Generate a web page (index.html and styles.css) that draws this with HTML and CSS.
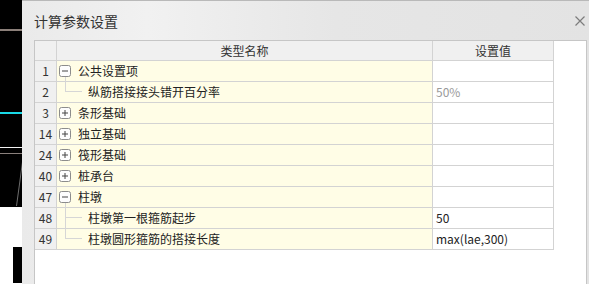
FILE: index.html
```html
<!DOCTYPE html>
<html lang="zh-CN">
<head>
    <meta charset="UTF-8">
    <meta name="viewport" content="width=device-width, initial-scale=1.0">
    <title>计算参数设置</title>
    <link rel="stylesheet" href="styles.css">
</head>
<body>
    <div class="screen">
        <!-- CAD drawing area behind the dialog -->
        <svg class="cad" width="22" height="284" viewBox="0 0 22 284">
            <rect x="0" y="0" width="22" height="284" fill="#000"/>
            <rect x="0" y="29" width="22" height="2" fill="#8b7f79"/>
            <rect x="0" y="112" width="22" height="2" fill="#19d9e6"/>
            <rect x="0" y="147" width="22" height="1" fill="#f2f2f2"/>
            <rect x="0" y="153" width="22" height="1" fill="#8a807c"/>
            <line x1="22.5" y1="162" x2="16.5" y2="206" stroke="#6e6e6e" stroke-width="1"/>
            <rect x="0" y="207" width="22" height="77" fill="#fff"/>
            <rect x="13" y="247" width="9" height="36" fill="#000"/>
        </svg>

        <div class="dialog">
            <div class="titlebar">
                <span class="title">计算参数设置</span>
                <svg class="close" width="10" height="10" viewBox="0 0 10 10">
                    <path d="M0.5 0.5 L9.5 9.5 M9.5 0.5 L0.5 9.5" stroke="#7c7c7c" stroke-width="1.2" fill="none"/>
                </svg>
            </div>
            <div class="body">
                <div class="panel">
                    <div class="grid">
                        <div class="hd"></div>
                        <div class="hd">类型名称</div>
                        <div class="hd">设置值</div>

                        <div class="num">1</div>
                        <div class="name">
                            <svg class="toggle" width="12" height="12" viewBox="0 0 12 12"><rect x="0.5" y="0.5" width="11" height="11" rx="2" fill="#fdfdfd" stroke="#8c8c8c"/><path d="M3 6 H9" stroke="#444"/></svg>
                            公共设置项
                        </div>
                        <div class="val"></div>

                        <div class="num">2</div>
                        <div class="name child">纵筋搭接接头错开百分率</div>
                        <div class="val muted">50%</div>

                        <div class="num">3</div>
                        <div class="name">
                            <svg class="toggle" width="12" height="12" viewBox="0 0 12 12"><rect x="0.5" y="0.5" width="11" height="11" rx="2" fill="#fdfdfd" stroke="#8c8c8c"/><path d="M3 6 H9 M6 3 V9" stroke="#444"/></svg>
                            条形基础
                        </div>
                        <div class="val"></div>

                        <div class="num">14</div>
                        <div class="name">
                            <svg class="toggle" width="12" height="12" viewBox="0 0 12 12"><rect x="0.5" y="0.5" width="11" height="11" rx="2" fill="#fdfdfd" stroke="#8c8c8c"/><path d="M3 6 H9 M6 3 V9" stroke="#444"/></svg>
                            独立基础
                        </div>
                        <div class="val"></div>

                        <div class="num">24</div>
                        <div class="name">
                            <svg class="toggle" width="12" height="12" viewBox="0 0 12 12"><rect x="0.5" y="0.5" width="11" height="11" rx="2" fill="#fdfdfd" stroke="#8c8c8c"/><path d="M3 6 H9 M6 3 V9" stroke="#444"/></svg>
                            筏形基础
                        </div>
                        <div class="val"></div>

                        <div class="num">40</div>
                        <div class="name">
                            <svg class="toggle" width="12" height="12" viewBox="0 0 12 12"><rect x="0.5" y="0.5" width="11" height="11" rx="2" fill="#fdfdfd" stroke="#8c8c8c"/><path d="M3 6 H9 M6 3 V9" stroke="#444"/></svg>
                            桩承台
                        </div>
                        <div class="val"></div>

                        <div class="num">47</div>
                        <div class="name">
                            <svg class="toggle" width="12" height="12" viewBox="0 0 12 12"><rect x="0.5" y="0.5" width="11" height="11" rx="2" fill="#fdfdfd" stroke="#8c8c8c"/><path d="M3 6 H9" stroke="#444"/></svg>
                            柱墩
                        </div>
                        <div class="val"></div>

                        <div class="num">48</div>
                        <div class="name child more">柱墩第一根箍筋起步</div>
                        <div class="val">50</div>

                        <div class="num">49</div>
                        <div class="name child">柱墩圆形箍筋的搭接长度</div>
                        <div class="val">max(lae,300)</div>
                    </div>
                </div>
            </div>
        </div>
    </div>
</body>
</html>
```

FILE: styles.css
```css
body {
    margin: 0;
    background: #000;
    font-family: "Noto Sans CJK SC", "Noto Sans", sans-serif;
    font-size: 12px;
    color: #222;
}
.screen {
    display: flex;
    width: 589px;
    height: 284px;
    overflow: hidden;
}
.cad {
    flex: none;
    display: block;
}
.dialog {
    flex: none;
    width: 570px;
    display: flex;
    flex-direction: column;
    border-top: 1px solid #b9b9b9;
    background: linear-gradient(to right, #eaeaea, #f1f1f1 22%, #e6e6e6 55%, #e3e3e3);
}
.titlebar {
    height: 39px;
    display: flex;
    align-items: center;
    justify-content: space-between;
    padding: 0 7px 0 12px;
    flex: none;
}
.title {
    font-size: 14px;
    color: #333;
    margin-top: 1px;
}
.close {
    display: block;
    margin-top: 1px;
}
.body {
    flex: 1;
    display: flex;
    padding-left: 12px;
}
.panel {
    width: 553px;
    box-sizing: border-box;
    background: #fff;
    border: 1px solid #c6c6c6;
    border-bottom: none;
}
.grid {
    display: grid;
    grid-template-columns: 22px 376px 121px;
    grid-template-rows: 20px;
    grid-auto-rows: 21px;
}
.grid > div {
    box-sizing: border-box;
    border-right: 1px solid #d3d3d3;
    border-bottom: 1px solid #d3d3d3;
    line-height: 20px;
    white-space: nowrap;
}
.hd {
    background: #f0f0f0;
    text-align: center;
    color: #333;
    line-height: 19px !important;
}
.num {
    background: #f0f0f0;
    text-align: center;
    color: #333;
}
.name {
    background: #fffde6;
    display: flex;
    align-items: center;
    padding-left: 2px;
    position: relative;
}
.toggle {
    display: block;
    flex: none;
    margin-right: 7px;
}
.name.child {
    padding-left: 31px;
}
.name.child::before {
    content: "";
    position: absolute;
    left: 8px;
    top: -5px;
    width: 17px;
    height: 15px;
    box-sizing: border-box;
    border-left: 1px solid #d6d6d6;
    border-bottom: 1px solid #d6d6d6;
}
.name.more::after {
    content: "";
    position: absolute;
    left: 8px;
    top: 10px;
    bottom: -1px;
    border-left: 1px solid #d6d6d6;
}
.val {
    background: #fff;
    padding-left: 3px;
}
.muted {
    color: #9a9a9a;
}
```
